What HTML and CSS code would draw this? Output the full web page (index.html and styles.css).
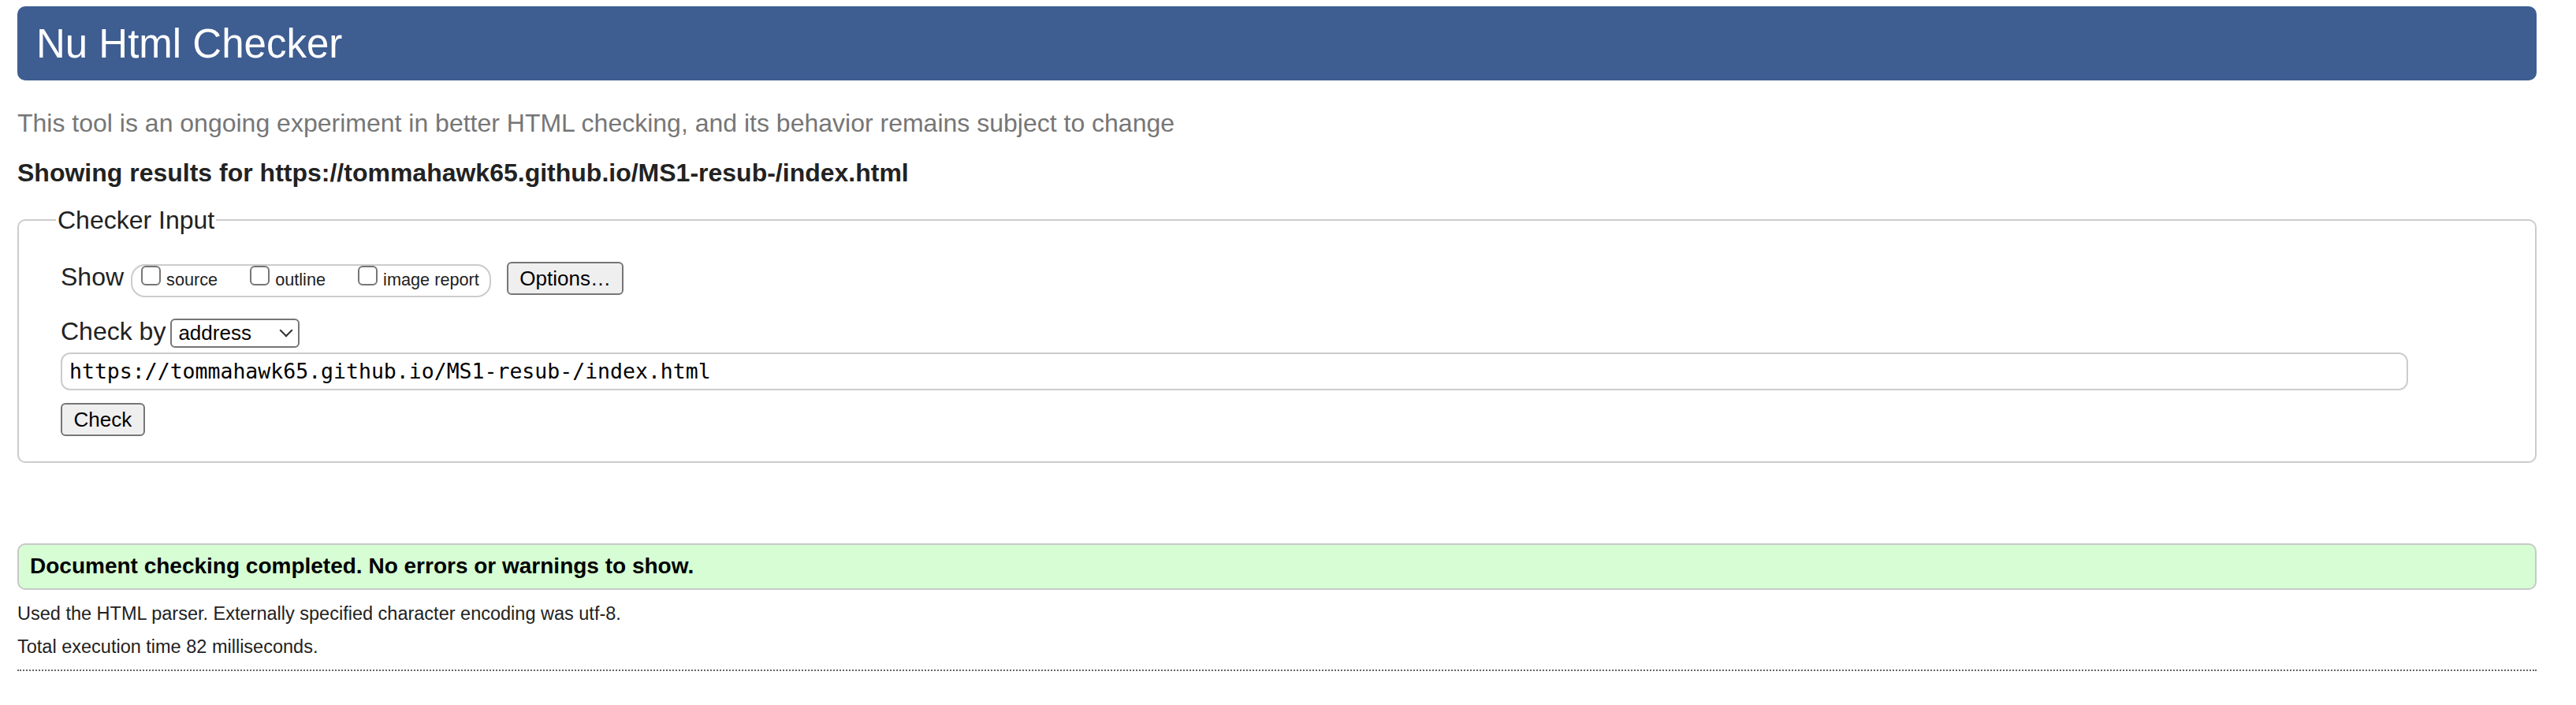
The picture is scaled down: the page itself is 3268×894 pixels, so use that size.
FILE: index.html
```html
<!DOCTYPE html>
<html lang="en">
<head>
<meta charset="utf-8">
<title>Nu Html Checker</title>
<link rel="stylesheet" href="styles.css">
</head>
<body>
<h1 class="title">Nu Html Checker</h1>
<p class="intro">This tool is an ongoing experiment in better HTML checking, and its behavior remains subject to change</p>
<h2 class="results-for">Showing results for https://tommahawk65.github.io/MS1-resub-/index.html</h2>
<form class="checker">
  <fieldset class="checker-input">
    <legend class="checker-legend">Checker Input</legend>
    <div class="row row-show">
      <span class="row-label label-show">Show</span>
      <span class="show-options">
        <label class="show-opt"><input type="checkbox" class="cb"><span>source</span></label>
        <label class="show-opt"><input type="checkbox" class="cb"><span>outline</span></label>
        <label class="show-opt"><input type="checkbox" class="cb"><span>image report</span></label>
      </span>
      <button type="button" class="btn btn-options">Options…</button>
    </div>
    <div class="row row-checkby">
      <label class="row-label label-checkby" for="docselect">Check by</label>
      <span class="select-wrap"><select id="docselect" class="select"><option>address</option></select></span>
    </div>
    <input class="url-input" type="url" value="https://tommahawk65.github.io/MS1-resub-/index.html">
    <div class="row row-submit"><button type="button" class="btn btn-check">Check</button></div>
  </fieldset>
</form>
<div class="success">Document checking completed. No errors or warnings to show.</div>
<div class="details">
  <p>Used the HTML parser. Externally specified character encoding was utf-8.</p>
  <p>Total execution time 82 milliseconds.</p>
</div>
<hr class="sep">
</body>
</html>
```

FILE: styles.css
```css
html { background: #fff; }
body {
  margin: 0;
  padding: 8px 50px 0 22px;
  font-family: "Liberation Sans", Arial, Helvetica, sans-serif;
  color: #222;
}

.title {
  margin: 0;
  padding: 18px 24px 16px;
  font-size: 51px;
  line-height: 60px;
  font-weight: normal;
  color: #fff;
  background: #3e5d91;
  border-radius: 10px;
}

.intro {
  margin: 36px 0 0;
  font-size: 32px;
  line-height: 36px;
  color: #767676;
}

.results-for {
  margin: 26px 0 0;
  font-size: 32px;
  line-height: 38px;
  font-weight: bold;
  color: #222;
}

.checker { margin: 0; }

.checker-input {
  margin: 20px 0 0;
  padding: 32px 161px 32px 53px;
  border: 2px solid #cccccc;
  border-radius: 10px;
  min-inline-size: 0;
}

.checker-legend {
  padding: 0 2px;
  margin-left: -6px;
  font-size: 32px;
  line-height: 42px;
  color: #222;
}

.row {
  display: flex;
  align-items: baseline;
}

.row-label {
  font-size: 32px;
  line-height: 36px;
  color: #222;
}

.label-show { margin-right: 9px; }
.label-checkby { margin-right: 6px; }

.show-options {
  display: inline-flex;
  align-items: baseline;
  gap: 41px;
  padding: 0 13px 8px 11px;
  border: 2px solid #cccccc;
  border-radius: 18px;
  margin-right: 20px;
}

.show-opt {
  display: inline-flex;
  align-items: baseline;
  font-size: 21.7px;
  line-height: 25px;
  color: #222;
}

.cb {
  appearance: none;
  -webkit-appearance: none;
  width: 25px;
  height: 25px;
  margin: 0 7px 0 0;
  border: 2px solid #767676;
  border-radius: 6px;
  background: #fff;
  box-sizing: border-box;
}

.btn {
  font-family: "Liberation Sans", Arial, Helvetica, sans-serif;
  font-size: 26px;
  line-height: 30px;
  padding: 4px 14.5px;
  border: 2px solid #767676;
  border-radius: 6px;
  background: #efefef;
  color: #000;
}

.row-checkby { margin-top: 25px; }

.select-wrap {
  display: inline-block;
  position: relative;
}

.select-wrap::after {
  content: "";
  position: absolute;
  right: 11px;
  top: 9px;
  width: 10px;
  height: 10px;
  border-right: 2px solid #333;
  border-bottom: 2px solid #333;
  transform: rotate(45deg);
  pointer-events: none;
}

.select {
  appearance: none;
  -webkit-appearance: none;
  width: 164px;
  height: 37px;
  box-sizing: border-box;
  margin: 0;
  padding: 0 0 0 8px;
  border: 2px solid #767676;
  border-radius: 6px;
  background: #fff;
  font-family: "Liberation Sans", Arial, Helvetica, sans-serif;
  font-size: 26px;
  color: #000;
}

.url-input {
  display: block;
  width: 100%;
  height: 48px;
  box-sizing: border-box;
  margin: 6px 0 0;
  padding: 0 9px;
  border: 2px solid #cccccc;
  border-radius: 12px;
  font-family: "DejaVu Sans Mono", "Liberation Mono", monospace;
  font-size: 26.5px;
  color: #000;
  background: #fff;
}

.row-submit { margin-top: 16px; }

.success {
  margin-top: 102px;
  padding: 11.5px 14px;
  border: 2px solid #c8c8c8;
  border-radius: 10px;
  background: #d6fdd3;
  font-size: 28px;
  line-height: 32px;
  font-weight: bold;
  color: #000;
}

.details {
  margin-top: 16px;
  display: flex;
  flex-direction: column;
  gap: 14px;
}

.details p {
  margin: 0;
  font-size: 23.5px;
  line-height: 28px;
  color: #222;
}

.sep {
  margin: 15px 0 0;
  height: 0;
  border: 0;
  border-top: 2px dotted #666;
}
```
